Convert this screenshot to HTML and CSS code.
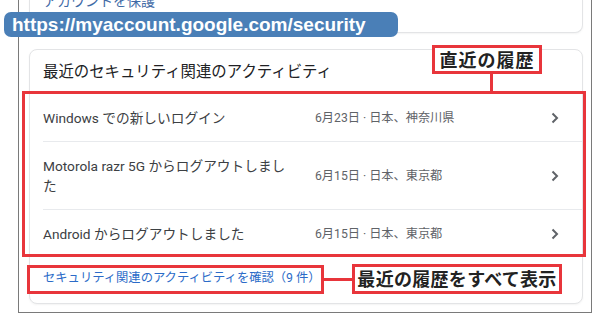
FILE: index.html
```html
<!DOCTYPE html>
<html lang="ja">
<head>
    <meta charset="UTF-8">
    <title>セキュリティ - Google アカウント</title>
    <link rel="stylesheet" href="styles.css">
</head>
<body>
    <div class="frame">
        <div class="card card-top">
            <div class="card-top-text">アカウントを保護</div>
        </div>

        <div class="card activity">
            <h2 class="activity-title">最近のセキュリティ関連のアクティビティ</h2>
            <ul class="activity-list">
                <li class="activity-row">
                    <span class="activity-name">Windows での新しいログイン</span>
                    <span class="activity-meta">6月23日 · 日本、神奈川県</span>
                    <svg class="chevron" width="20" height="20" viewBox="0 0 20 20"><path d="M7.5 5.5l4.5 4.5-4.5 4.5" fill="none" stroke="#5f6368" stroke-width="2"/></svg>
                </li>
                <li class="activity-row">
                    <span class="activity-name">Motorola razr 5G からログアウトしました</span>
                    <span class="activity-meta">6月15日 · 日本、東京都</span>
                    <svg class="chevron" width="20" height="20" viewBox="0 0 20 20"><path d="M7.5 5.5l4.5 4.5-4.5 4.5" fill="none" stroke="#5f6368" stroke-width="2"/></svg>
                </li>
                <li class="activity-row">
                    <span class="activity-name">Android からログアウトしました</span>
                    <span class="activity-meta">6月15日 · 日本、東京都</span>
                    <svg class="chevron" width="20" height="20" viewBox="0 0 20 20"><path d="M7.5 5.5l4.5 4.5-4.5 4.5" fill="none" stroke="#5f6368" stroke-width="2"/></svg>
                </li>
            </ul>
            <div class="activity-footer">
                <a class="activity-link" href="#">セキュリティ関連のアクティビティを確認（9 件）</a>
            </div>
        </div>
    </div>

    <!-- annotations laid over the screenshot -->
    <div class="url-badge">https://myaccount.google.com/security</div>

    <div class="mark mark-list"></div>
    <div class="mark-line mark-line-v"></div>
    <div class="callout callout-recent">直近の履歴</div>

    <div class="mark mark-link"></div>
    <div class="mark-line mark-line-h"></div>
    <div class="callout callout-all">最近の履歴をすべて表示</div>
</body>
</html>
```

FILE: styles.css
```css
body {
    margin: 0;
    background: #fff;
    font-family: Roboto, "Noto Sans CJK JP", sans-serif;
    color: #3c4043;
    position: relative;
    height: 319px;
    overflow: hidden;
}

.frame {
    margin-left: 18px;
    width: 574px;
    height: 313px;
    box-sizing: border-box;
    border: 1px solid #7a7a7a;
    border-top: none;
    padding: 0 8px 0 10px;
    overflow: hidden;
}

.card {
    background: #fff;
    border: 1px solid #e3e4e6;
    border-radius: 8px;
    box-shadow: 0 1px 2px rgba(60, 64, 67, 0.06);
}

.card-top {
    height: 33px;
    box-sizing: border-box;
    border-top: none;
    border-top-left-radius: 0;
    border-top-right-radius: 0;
    margin-bottom: 16px;
    overflow: hidden;
}

.card-top-text {
    margin-top: -9px;
    padding-left: 13px;
    font-size: 14px;
    line-height: 20px;
    color: #3f6aa6;
}

.activity {
    padding: 12px 0 0 13px;
    height: 255px;
    box-sizing: border-box;
}

.activity-title {
    margin: 0 0 12px 0;
    font-size: 15.4px;
    font-weight: 400;
    line-height: 20px;
    color: #202124;
}

.activity-list {
    list-style: none;
    margin: 0;
    padding: 0;
}

.activity-row {
    display: grid;
    grid-template-columns: 248px 1fr 20px;
    column-gap: 24px;
    align-items: center;
    padding: 14px 17px 13px 0;
    border-bottom: 1px solid #e8eaed;
    font-size: 13.7px;
    line-height: 20px;
}

.activity-row:last-child {
    border-bottom: none;
}

.activity-name {
    color: #3c4043;
    line-height: 20px;
}

.activity-meta {
    font-size: 12.2px;
    color: #5f6368;
}

.chevron {
    display: block;
}

.activity-footer {
    padding: 10px 0 0 0;
}

.activity-link {
    font-size: 12.3px;
    line-height: 20px;
    color: #2b6bc8;
    text-decoration: none;
}

.url-badge {
    position: absolute;
    left: 4px;
    top: 12px;
    width: 394px;
    height: 25px;
    box-sizing: border-box;
    padding-left: 8px;
    background: #4a7fb7;
    border-radius: 7px;
    color: #fff;
    font-family: "Liberation Sans", Arial, sans-serif;
    font-weight: 700;
    font-size: 19px;
    line-height: 25px;
}

.mark {
    position: absolute;
    border: 3px solid #e8353b;
    box-sizing: border-box;
}

.mark-list {
    left: 22px;
    top: 91px;
    width: 564px;
    height: 166px;
}

.mark-link {
    left: 27px;
    top: 265px;
    width: 297px;
    height: 29px;
}

.mark-line {
    position: absolute;
    background: #e8353b;
}

.mark-line-v {
    left: 490px;
    top: 72px;
    width: 3px;
    height: 20px;
}

.mark-line-h {
    left: 323px;
    top: 278px;
    width: 30px;
    height: 3px;
}

.callout {
    position: absolute;
    box-sizing: border-box;
    border: 3px solid #e8353b;
    background: #fff;
    color: #222;
    font-family: "Noto Sans CJK JP", sans-serif;
    font-weight: 700;
    font-size: 18px;
    line-height: 22px;
    text-align: center;
}

.callout-recent {
    left: 432px;
    top: 45px;
    width: 110px;
    height: 29px;
    letter-spacing: 1px;
}

.callout-all {
    left: 352px;
    top: 264px;
    width: 210px;
    height: 30px;
    line-height: 23px;
    letter-spacing: 0.3px;
}
```
